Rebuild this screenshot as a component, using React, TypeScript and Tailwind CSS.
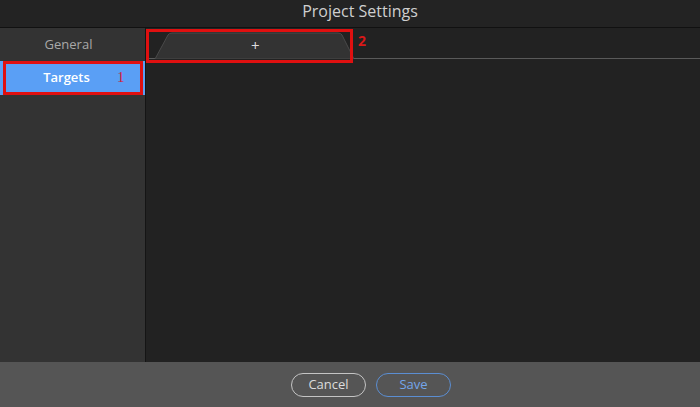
import React from "react";

export default function App() {
    const sections = [
        { name: "General", active: false },
        { name: "Targets", active: true },
    ];

    return (
        <div className="w-[700px] h-[407px] flex flex-col bg-[#222222] font-['Open_Sans',sans-serif] overflow-hidden">
            {/* TITLE */}
            <div className="h-[28px] shrink-0 flex items-center justify-center border-b border-[#111111] bg-[#232323]">
                <span className="text-[16px] text-[#cfcfcf] pl-[20px] -mt-[5px]">Project Settings</span>
            </div>

            <div className="flex flex-1 min-h-0">
                {/* SIDEBAR */}
                <div className="w-[146px] shrink-0 bg-[#333333] border-r border-[#151515] flex flex-col">
                    {sections.map((item) => (
                        <div
                            key={item.name}
                            className={
                                item.active
                                    ? "relative h-[34px] flex items-center justify-center bg-[#5a9ff5] text-white font-semibold text-[13px] pr-[12px]"
                                    : "h-[33px] flex items-center justify-center text-[#a8a8a8] text-[13px] pr-[8px]"
                            }
                        >
                            {item.name}
                            {item.active && (
                                <>
                                    <div className="absolute left-[3px] top-[0px] w-[140px] h-[34px] border-[3px] border-[#e01010]" />
                                    <span className="absolute left-[117px] top-[5px] text-[#d0203a] text-[15px] font-normal font-['Liberation_Serif',serif]">1</span>
                                </>
                            )}
                        </div>
                    ))}
                </div>

                {/* MAIN */}
                <div className="flex-1 flex flex-col">
                    <div className="relative h-[31px] shrink-0 border-b border-[#5a5a5a]">
                        <svg className="absolute left-[8px] top-[4px]" width="200" height="27" viewBox="0 0 200 27">
                            <path d="M1 27 L14 3 Q15 1 18 1 L184 1 Q187 1 188 3 L200 27 Z" fill="#333333" stroke="#4a4a4a" strokeWidth="1" />
                        </svg>
                        <span className="absolute left-[105px] top-[6px] text-[15px] text-[#dddddd]">+</span>
                        <div className="absolute left-[0px] top-[1px] w-[207px] h-[34px] border-[3px] border-[#e01010]" />
                        <span className="absolute left-[212px] top-[2px] text-[#d81818] text-[14px] font-bold">2</span>
                    </div>
                    <div className="flex-1" />
                </div>
            </div>

            {/* FOOTER */}
            <div className="h-[45px] shrink-0 bg-[#555555] flex items-center justify-center gap-[10px] pl-[42px]">
                <button className="w-[75px] h-[24px] rounded-full border border-[#c4c4c4] text-[#dcdcdc] text-[13px] leading-none">
                    Cancel
                </button>
                <button className="w-[75px] h-[24px] rounded-full border border-[#5b8ed2] text-[#74a6ea] text-[13px] leading-none">
                    Save
                </button>
            </div>
        </div>
    );
}
